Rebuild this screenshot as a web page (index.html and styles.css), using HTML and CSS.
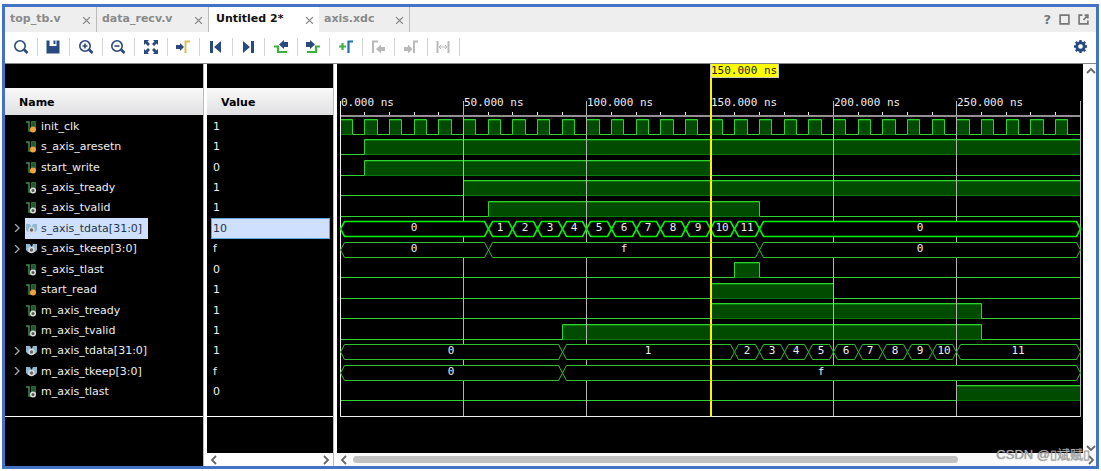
FILE: index.html
```html
<!DOCTYPE html>
<html lang="en">
<head>
<meta charset="utf-8">
<title>Untitled 2*</title>
<link rel="stylesheet" href="styles.css">
</head>
<body>
<main class="window">
  <header class="tabbar">
    <nav class="tabs">
      <div class="tab"><span>top_tb.v</span><button class="close" aria-label="Close top_tb.v"><svg viewBox="0 0 8 8"><path d="M1 1l6 6M7 1L1 7"/></svg></button></div>
      <div class="tab"><span>data_recv.v</span><button class="close" aria-label="Close data_recv.v"><svg viewBox="0 0 8 8"><path d="M1 1l6 6M7 1L1 7"/></svg></button></div>
      <div class="tab active"><span>Untitled 2*</span><button class="close" aria-label="Close Untitled 2*"><svg viewBox="0 0 8 8"><path d="M1 1l6 6M7 1L1 7"/></svg></button></div>
      <div class="tab"><span>axis.xdc</span><button class="close" aria-label="Close axis.xdc"><svg viewBox="0 0 8 8"><path d="M1 1l6 6M7 1L1 7"/></svg></button></div>
    </nav>
    <div class="window-actions">
      <button class="help" aria-label="Help">?</button>
      <button aria-label="Maximize"><svg viewBox="0 0 10 10"><path d="M1 1h8v8H1z"/></svg></button>
      <button aria-label="Float"><svg viewBox="0 0 10 10"><path d="M4 1H1v8h8V6M5 5.500L8 2M6 1h3v3"/></svg></button>
    </div>
  </header>

  <div class="toolbar">
    <div class="tools">
      <button aria-label="Find"><svg viewBox="0 0 16 16"><circle class="navy-line" cx="7" cy="7" r="5.200"/><path class="navy-line thick" d="M11 10.500l3.500 3.500"/></svg></button>
      <button aria-label="Save"><svg viewBox="0 0 16 16"><path class="navy" d="M1.500 1.500h3V7h7V1.500h3v13h-13zM8.500 1.500h2V5h-2z"/></svg></button>
      <button aria-label="Zoom in"><svg viewBox="0 0 16 16"><circle class="navy-line" cx="7" cy="7" r="5.200"/><path class="navy-line thick" d="M11 10.500l3.500 3.500"/><path class="navy-line" d="M4.500 7h5M7 4.500v5"/></svg></button>
      <button aria-label="Zoom out"><svg viewBox="0 0 16 16"><circle class="navy-line" cx="7" cy="7" r="5.200"/><path class="navy-line thick" d="M11 10.500l3.500 3.500"/><path class="navy-line" d="M4.500 7h5"/></svg></button>
      <button aria-label="Zoom fit"><svg viewBox="0 0 16 16"><path class="navy" d="M1 1h5L4.500 2.500 7 5 5 7 2.500 4.500 1 6zM15 1v5l-1.500-1.500L11 7 9 5l2.500-2.500L10 1zM1 15v-5l1.500 1.500L5 9l2 2-2.500 2.500L6 15zM15 15h-5l1.500-1.500L9 11l2-2 2.500 2.500L15 10z"/></svg></button>
      <button aria-label="Go to cursor"><svg viewBox="0 0 16 16"><path class="navy" d="M1 6h4V4l4 4-4 4v-2H1z"/><path class="gold-line" d="M10.500 14V2.500H15"/></svg></button>
      <button aria-label="Go to start"><svg viewBox="0 0 16 16"><path class="navy" d="M2 2h3v12H2zM13 2v12L6 8z"/></svg></button>
      <button aria-label="Go to end"><svg viewBox="0 0 16 16"><path class="navy" d="M11 2h3v12h-3zM3 2v12l7-6z"/></svg></button>
      <button aria-label="Previous transition"><svg viewBox="0 0 16 16"><path class="navy" d="M15 3h-4V1L6 5.500 11 10V8h4z"/><path class="green-line" d="M1 7.500h4V13h9"/></svg></button>
      <button aria-label="Next transition"><svg viewBox="0 0 16 16"><path class="navy" d="M1 3h4V1l5 4.500L5 10V8H1z"/><path class="green-line" d="M2 13h9V7.500h4"/></svg></button>
      <button aria-label="Add marker"><svg viewBox="0 0 16 16"><path class="green-line" d="M1 7.500h7M4.500 4v7"/><path class="blue-line" d="M10.500 14V2.500H15"/></svg></button>
      <button disabled aria-label="Previous marker"><svg viewBox="0 0 16 16"><path class="grey-line" d="M3 14V2.500h5"/><path class="grey" d="M15 8h-4V5.500L6 10l5 4.500V12h4z"/></svg></button>
      <button disabled aria-label="Next marker"><svg viewBox="0 0 16 16"><path class="grey-line" d="M11 14V2.500h4"/><path class="grey" d="M1 8h4V5.500L9.500 10 5 14.500V12H1z"/></svg></button>
      <button disabled aria-label="Swap cursors"><svg viewBox="0 0 16 16"><path class="grey-line" d="M2.500 2v12M13.500 2v12"/><path class="grey-thin" d="M4 8h8M6 6L4 8l2 2M10 6l2 2-2 2"/></svg></button>
    </div>
    <button class="settings" aria-label="Settings"><svg viewBox="0 0 16 16"><circle class="gear-body" cx="8" cy="8" r="4"/><path class="gear-teeth" d="M8 1v3M8 12v3M1 8h3M12 8h3M3 3l2.200 2.200M10.800 10.800L13 13M13 3l-2.200 2.200M5.200 10.800L3 13"/></svg></button>
  </div>

  <div class="content">
    <section class="pane names">
      <table><thead><tr><th>Name</th></tr></thead><tbody id="names"></tbody></table>
      <div class="remainder"></div>
    </section>
    <section class="pane values">
      <table><thead><tr><th>Value</th></tr></thead><tbody id="values"></tbody></table>
      <div class="remainder"></div>
      <div class="hscroll">
        <button aria-label="Scroll left"><svg viewBox="0 0 10 10"><path d="M7 1L3 5l4 4"/></svg></button>
        <button aria-label="Scroll right"><svg viewBox="0 0 10 10"><path d="M3 1l4 4-4 4"/></svg></button>
      </div>
    </section>
    <section class="waves">
      <svg id="plot" class="plot" role="img" aria-label="Waveforms"></svg>
      <div class="vscroll">
        <button aria-label="Scroll up"><svg viewBox="0 0 10 10"><path d="M1 7l4-4 4 4"/></svg></button>
        <button aria-label="Scroll down"><svg viewBox="0 0 10 10"><path d="M1 3l4 4 4-4"/></svg></button>
      </div>
      <div class="hscroll wide">
        <button aria-label="Scroll left"><svg viewBox="0 0 10 10"><path d="M7 1L3 5l4 4"/></svg></button>
        <div class="track"><div class="thumb"></div></div>
        <button aria-label="Scroll right"><svg viewBox="0 0 10 10"><path d="M3 1l4 4-4 4"/></svg></button>
      </div>
    </section>
  </div>
  <div class="watermark">CSDN @<span class="box">▯</span>斌赋<span class="box">▯</span></div>
</main>
<script src="wave.js"></script>
</body>
</html>
```
FILE: styles.css
```css
* { box-sizing: border-box; }
body {
  margin: 0;
  padding: 4px 2px 2px;
  height: 100vh;
  background: #fff;
  font-family: "DejaVu Sans", "Noto Sans CJK SC", sans-serif;
  font-size: 11px;
}
button {
  display: flex;
  align-items: center;
  justify-content: center;
  border: 0;
  padding: 0;
  background: none;
  font: inherit;
  color: inherit;
}
svg { display: block; fill: none; }
.window {
  position: relative;
  display: flex;
  flex-direction: column;
  height: 100%;
  border: 3px solid #4472c4;
  background: #fff;
}

.tabbar {
  display: flex;
  justify-content: space-between;
  height: 25px;
  background: #eee;
}
.tabs {
  display: grid;
  grid-template-columns: 92px 112px 110px 91px;
}
.tab {
  display: flex;
  align-items: center;
  justify-content: space-between;
  padding: 0 5px 2px;
  border-right: 1px solid #bbb;
  font-weight: bold;
  color: #8a8a8a;
}
.tab.active {
  padding-left: 7px;
  border-right: 0;
  background: #fff;
  color: #111;
}
.close svg { width: 9px; height: 9px; stroke: #888; stroke-width: 1.200; }
.close { margin-top: 3px; }
.window-actions {
  display: flex;
  align-items: center;
  gap: 8px;
  padding-right: 7px;
  color: #777;
}
.window-actions svg { width: 11px; height: 11px; stroke: #777; stroke-width: 1.500; }
.help { font-size: 13px; font-weight: bold; }

.toolbar {
  display: flex;
  align-items: center;
  justify-content: space-between;
  height: 32px;
  padding: 0 8px 2px 0;
  border-bottom: 1px solid #888;
}
.tools {
  display: grid;
  grid-template-columns: repeat(14, 1fr);
  width: 455px;
}
.tools button { height: 18px; border-right: 1px solid #d4d4d4; }
.tools svg { width: 16px; height: 16px; }
.settings svg { width: 15px; height: 15px; }
.navy { fill: #294a7e; }
.grey { fill: #b9b9b9; }
.navy-line { stroke: #294a7e; stroke-width: 1.600; }
.thick { stroke-width: 2.600; }
.gold-line { stroke: #e0bd4a; stroke-width: 2; }
.green-line { stroke: #3bb23f; stroke-width: 2.200; }
.blue-line { stroke: #1f6fa8; stroke-width: 2.200; }
.grey-line { stroke: #b9b9b9; stroke-width: 2; }
.grey-thin { stroke: #b9b9b9; stroke-width: 1; }
.gear-body { stroke: #294a7e; stroke-width: 3; }
.gear-teeth { stroke: #294a7e; stroke-width: 2.600; }

.content {
  display: grid;
  grid-template-columns: 199px 127px 1fr;
  gap: 3px;
  flex: 1;
  min-height: 0;
}
.pane {
  display: flex;
  flex-direction: column;
  background: #000;
  border-right: 1px solid #bbb;
}
.pane table { display: block; padding-top: 24px; }
.pane thead, .pane tr, .pane th { display: block; }
.pane th {
  height: 27px;
  padding-left: 14px;
  background: linear-gradient(#f9f9f9, #e0e0e2);
  font-size: 11px;
  line-height: 27px;
  text-align: left;
}
.pane tbody {
  display: grid;
  grid-template-rows: repeat(14, 1fr);
  height: 287px;
  padding-top: 1px;
}
.pane tbody tr { display: flex; min-height: 0; }
.pane td {
  display: flex;
  align-items: center;
  color: #eee;
  padding: 0;
  white-space: nowrap;
}
.names td { padding-left: 8px; }
.expander { width: 12px; }
.expander svg { width: 8px; height: 8px; stroke: #aaa; stroke-width: 1.300; }
.signal {
  display: flex;
  align-items: center;
  align-self: stretch;
  gap: 3px;
  padding-right: 6px;
}
.signal svg { width: 13px; height: 13px; }
.values td { flex: 1; margin: 0 3px 0 4px; padding-left: 2px; }
.selected .signal, .values .selected td { background: #cfe0ff; color: #26334a; }
.values .selected td { border: 1px solid #5fa8dc; padding-left: 1px; }
.remainder {
  flex: 1;
  margin-top: 14px;
  border-top: 1px solid #fff;
}

.hscroll {
  display: flex;
  align-items: center;
  justify-content: space-between;
  height: 13px;
  padding: 0 2px;
  background: #fff;
}
.hscroll svg, .vscroll svg { width: 10px; height: 10px; stroke: #666; stroke-width: 1.800; }
.waves {
  display: grid;
  grid-template-columns: 1fr 13px;
  grid-template-rows: 1fr 13px;
  min-width: 0;
  min-height: 0;
}
.plot { width: 100%; height: 100%; background: #000; overflow: hidden; }
.vscroll {
  display: flex;
  flex-direction: column;
  align-items: center;
  justify-content: space-between;
  padding: 2px 0 0 2px;
  background: #fcfcfc;
}
.wide { grid-column: 1 / 3; padding-right: 0; background: #fafafa; }
.track { flex: 1; margin: 0 4px; }
.thumb { width: 83%; height: 7px; border-radius: 4px; background: #c1c1c1; }

.fill { fill: #004b00; }
.base { stroke: #087808; }
.line { stroke: #2fd22f; }
.bus { fill: #000; stroke: #2fc02f; }
.bus.bright { stroke: #00f400; stroke-width: 1.600; }
.major { stroke: #b4b4b4; }
.axis { fill: #938f93; }
.tick, .floor { stroke: #eee; }
.cursor { fill: #fff200; }
.flag { fill: #ff0; stroke: #d0d0b0; }
.plot text {
  font-family: "DejaVu Sans Mono", monospace;
  font-size: 11px;
  fill: #eee;
}
.plot .value { text-anchor: middle; }
.plot .flag-text { fill: #222; }

.watermark {
  position: absolute;
  right: 6px;
  bottom: 2px;
  display: flex;
  align-items: center;
  font: 13px/19px "Liberation Sans", "Noto Sans CJK SC", sans-serif;
  white-space: pre;
  color: #aaa;
  text-shadow: 0 0 1px #777;
}
.box { font-size: 13px; }
```
FILE: wave.js
```js
const END = 300;
const CURSOR = 150;

const sequence = (first, last, start) =>
  Array.from({ length: last - first + 1 }, (_, i) => [start + i * 10, String(first + i)]);

const signals = [
  { name: "init_clk", value: "1", input: true, high: Array.from({ length: 30 }, (_, i) => [i * 10, i * 10 + 5]) },
  { name: "s_axis_aresetn", value: "1", input: true, high: [[10, 300]] },
  { name: "start_write", value: "0", input: true, high: [[10, 150]] },
  { name: "s_axis_tready", value: "1", high: [[50, 300]] },
  { name: "s_axis_tvalid", value: "1", high: [[60, 170]] },
  { name: "s_axis_tdata[31:0]", value: "10", selected: true, bus: [[0, "0"], ...sequence(1, 11, 60), [170, "0"]] },
  { name: "s_axis_tkeep[3:0]", value: "f", bus: [[0, "0"], [60, "f"], [170, "0"]] },
  { name: "s_axis_tlast", value: "0", high: [[160, 170]] },
  { name: "start_read", value: "1", input: true, high: [[150, 200]] },
  { name: "m_axis_tready", value: "1", high: [[150, 260]] },
  { name: "m_axis_tvalid", value: "1", high: [[90, 260]] },
  { name: "m_axis_tdata[31:0]", value: "1", bus: [[0, "0"], [90, "1"], ...sequence(2, 11, 160)] },
  { name: "m_axis_tkeep[3:0]", value: "f", bus: [[0, "0"], [90, "f"]] },
  { name: "m_axis_tlast", value: "0", high: [[250, 300]] }
];

function icon(s) {
  if (s.bus) {
    return '<svg viewBox="0 0 13 13"><path fill="#8fb8d0" d="M1 2h4l1.500 3L8 2h4v6l-2 2H3L1 8z"/>' +
      '<circle cx="6.500" cy="8" r="2.500" fill="#666" stroke="#ddd" stroke-width="1.500"/></svg>';
  }
  const badge = s.input
    ? '<circle cx="8" cy="9.500" r="3" fill="#f0a23c"/>'
    : '<circle cx="8" cy="9.500" r="2.300" fill="#555" stroke="#ddd" stroke-width="1.500"/>';
  return '<svg viewBox="0 0 13 13"><path stroke="#3a9148" stroke-width="1.500" d="M1 2h3v9h3V2h3v7"/>' +
    '<path fill="#1d5c2a" d="M7 2h3v6H7z"/>' + badge + '</svg>';
}

document.getElementById("names").innerHTML = signals.map(s =>
  `<tr class="${s.selected ? "selected" : ""}"><td><span class="expander">` +
  (s.bus ? '<svg viewBox="0 0 8 8"><path d="M2 0l4 4-4 4"/></svg>' : "") +
  `</span><span class="signal">${icon(s)}${s.name}</span></td></tr>`).join("");
document.getElementById("values").innerHTML = signals.map(s =>
  `<tr class="${s.selected ? "selected" : ""}"><td>${s.value}</td></tr>`).join("");

function draw() {
  const plot = document.getElementById("plot");
  const left = 3;
  const right = plot.clientWidth - 3;
  const x = t => Math.floor(left + (right - left) * t / END) + 0.5;
  const line = (cls, x1, y1, x2, y2) => `<path class="${cls}" d="M${x1} ${y1}L${x2} ${y2}"/>`;
  const floor = 352.5;
  const rowTop = i => 55 + Math.round(i * 266 / 13) + 0.5;
  let waves = "", grid = "", buses = "", labels = "";

  signals.forEach((s, i) => {
    const top = rowTop(i), low = top + 15;
    if (s.high) {
      let d = "";
      let from = 0;
      for (const [a, b] of s.high) {
        waves += `<rect class="fill" x="${x(a)}" y="${top}" width="${x(b) - x(a)}" height="15"/>`;
        waves += line("base", x(a), low, x(b), low) + line("base", x(a), top + 1, x(b), top + 1);
        if (a > from) d += `M${x(from)} ${low}H${x(a)}`;
        d += `M${x(a)} ${low}V${top}H${x(b)}`;
        if (b < END) d += `V${low}`;
        from = b;
      }
      if (from < END) d += `H${x(END)}`;
      waves += `<path class="line" d="${d}"/>`;
    } else {
      s.bus.forEach(([start, text], k) => {
        const a = x(start), b = x(k + 1 < s.bus.length ? s.bus[k + 1][0] : END);
        buses += `<path class="bus ${s.selected ? "bright" : ""}" d="M${a} ${top + 7.5}L${a + 4} ${top}H${b - 4}L${b} ${top + 7.5}L${b - 4} ${low}H${a + 4}Z"/>`;
        labels += `<text class="value" x="${Math.floor((a + b) / 2)}" y="${top + 9.5}">${text}</text>`;
      });
    }
  });

  for (let t = 0; t <= END; t += 10) {
    if (t % 50) {
      grid += line("tick", x(t), 48, x(t), 51);
    } else {
      grid += line("major", x(t), 37, x(t), floor);
      if (t < END) labels += `<text x="${x(t) + 0.5}" y="42">${t}.000 ns</text>`;
    }
  }

  const c = x(CURSOR);
  plot.innerHTML = waves + grid +
    `<rect class="axis" x="${left}" y="51" width="${right - left}" height="2"/>` +
    line("floor", x(0), floor, x(END), floor) + line("tick", x(0), 37, x(0), floor) +
    buses + labels +
    `<rect class="cursor" x="${c - 0.5}" y="0" width="2" height="${floor}"/>` +
    `<rect class="flag" x="${c}" y="-0.5" width="68" height="14"/>` +
    `<text class="flag-text" x="${c + 0.5}" y="10">${CURSOR}.000 ns</text>`;
}

draw();
window.addEventListener("resize", draw);
```
